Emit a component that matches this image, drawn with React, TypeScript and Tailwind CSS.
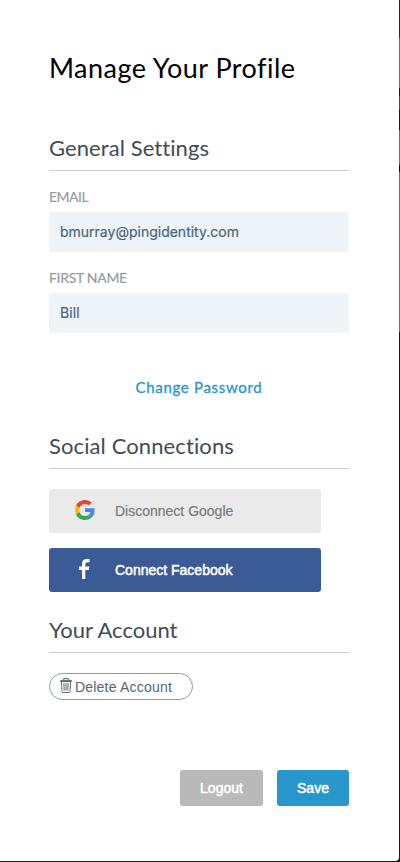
import type { ReactNode } from "react";

function Heading({ children, spacing }: { children: ReactNode; spacing: string }) {
  return (
    <h2 className={`h-[33px] border-b border-[#cccfd1] text-[22px] leading-[20px] whitespace-nowrap text-[#434b54] ${spacing}`}>
      {children}
    </h2>
  );
}

function Field({ label, value, labelClass, valueClass }: { label: string; value: string; labelClass: string; valueClass: string }) {
  return (
    <label className="flex flex-col">
      <span className={`h-[22px] text-[14px] leading-[14px] text-[#959da3] [-webkit-text-stroke:0.2px_#959da3] ${labelClass}`}>{label}</span>
      <span className={`flex h-10 items-center rounded-[3px] bg-[#eef4f7] px-[11px] pb-px font-['Inter',sans-serif] text-[14px] text-[#4b6580] [-webkit-text-stroke:0.2px_#4b6580] ${valueClass}`}>
        {value}
      </span>
    </label>
  );
}

function GoogleLogo() {
  return (
    <svg viewBox="0 0 48 48" className="size-5">
      <path fill="#EA4335" d="M24 9.5c3.54 0 6.71 1.22 9.21 3.6l6.85-6.85C35.9 2.38 30.47 0 24 0 14.62 0 6.51 5.38 2.56 13.22l7.98 6.19C12.43 13.72 17.74 9.5 24 9.5z" />
      <path fill="#4285F4" d="M46.98 24.55c0-1.57-.15-3.09-.38-4.55H24v9.02h12.94c-.58 2.96-2.26 5.48-4.78 7.18l7.73 6c4.51-4.18 7.09-10.36 7.09-17.65z" />
      <path fill="#FBBC05" d="M10.53 28.59c-.48-1.45-.76-2.99-.76-4.59s.27-3.14.76-4.59l-7.98-6.19C.92 16.46 0 20.12 0 24c0 3.88.92 7.54 2.56 10.78l7.97-6.19z" />
      <path fill="#34A853" d="M24 48c6.48 0 11.93-2.13 15.89-5.81l-7.73-6c-2.15 1.45-4.92 2.3-8.16 2.3-6.26 0-11.57-4.22-13.47-9.91l-7.98 6.19C6.51 42.62 14.62 48 24 48z" />
    </svg>
  );
}

function FacebookLogo() {
  return (
    <svg viewBox="0 0 11 20" className="h-5 w-[11px]" fill="white">
      <path d="M3 20V11H0V7.5h3V4.9C3 1.8 4.8 0 7.8 0H10.5v3.2H8.8C7.2 3.2 6.3 4 6.3 5.3v2.2h4L9.8 11H6.3v9H3z" />
    </svg>
  );
}

function TrashIcon() {
  return (
    <svg viewBox="0 0 12 15" className="h-[15px] w-3 shrink-0" fill="none" stroke="#596875" strokeWidth="1">
      <path d="M0.5 3.5V2.4h11v1.1zM3.7 2.3V.6h4.6v1.7M1.4 3.6l.6 10c0 .6.4.9.9.9h6.2c.5 0 .9-.3.9-.9l.6-10M3.9 5l.3 7.6M6 5v7.6M8.1 5l-.3 7.6" />
    </svg>
  );
}

export default function App() {
  return (
    <div className="flex h-[862px] w-[400px] bg-[#171a16] font-['Lato',sans-serif] [font-variant-ligatures:none]">
      <main className="flex h-[861px] w-[399px] flex-col rounded-br-[4px] bg-white pr-[50px] pl-[49px]">
        <h1 className="mt-[54px] h-[84px] text-[27px] leading-[28px] tracking-[0.46px] whitespace-nowrap text-black">Manage Your Profile</h1>
        <Heading spacing="tracking-[0.08px]">General Settings</Heading>
        <div className="mt-[19px] flex flex-col gap-[19px]">
          <Field label="EMAIL" value="bmurray@pingidentity.com" labelClass="tracking-[-0.5px]" valueClass="tracking-[0px]" />
          <Field label="FIRST NAME" value="Bill" labelClass="tracking-[-0.3px]" valueClass="tracking-[0.1px]" />
        </div>
        <a className="mt-[45px] h-[58px] text-center text-[15px] leading-[18px] font-normal tracking-[0.68px] text-[#2996cc] [-webkit-text-stroke:0.3px_#2996cc]">Change Password</a>
        <Heading spacing="tracking-[0.11px]">Social Connections</Heading>
        <div className="mt-5 flex w-[272px] flex-col gap-[15px] font-['Liberation_Sans',sans-serif] text-[14px]">
          <button className="flex h-11 items-center rounded-[3px] bg-[#eaeaea] text-[#7b7b7b]">
            <span className="ml-[26px] flex w-10 shrink-0 pb-[2px]"><GoogleLogo /></span>
            <span className="whitespace-nowrap [-webkit-text-stroke:0.2px_#7b7b7b]">Disconnect Google</span>
          </button>
          <button className="flex h-11 items-center rounded-[3px] bg-[#3b5b96] text-white">
            <span className="ml-[30px] flex w-9 shrink-0 pb-[2px]"><FacebookLogo /></span>
            <span className="whitespace-nowrap [-webkit-text-stroke:0.5px_white]">Connect Facebook</span>
          </button>
        </div>
        <div className="mt-[28px]">
          <Heading spacing="tracking-[0px]">Your Account</Heading>
        </div>
        <button className="mt-5 flex h-[27px] w-36 items-center gap-[3px] rounded-full border border-[#919a9e] pl-[10px] font-['Liberation_Sans',sans-serif] text-[14px] text-[#566473]">
          <span className="flex pb-[3px]"><TrashIcon /></span>
          <span className="pt-[2px] tracking-[0.2px] whitespace-nowrap">Delete Account</span>
        </button>
        <div className="mt-[70px] flex h-9 justify-end gap-[14px] font-['Liberation_Sans',sans-serif] text-[14px] text-white [-webkit-text-stroke:0.5px_white]">
          <button className="w-[83px] rounded-[3px] bg-[#b9b9b9]">Logout</button>
          <button className="w-[72px] rounded-[3px] bg-[#2996cc]">Save</button>
        </div>
      </main>
      <div className="flex w-px flex-col">
        <span className="h-[38px] bg-[#172f2c]" />
        <span className="h-[50px] bg-[#5b7770]" />
        <span className="h-[8px] bg-[#0d1917]" />
        <span className="h-[14px] bg-[#3b504a]" />
        <span className="h-[20px] bg-[#0d1917]" />
        <span className="h-[35px] bg-[#5b7770]" />
        <span className="h-[7px] bg-[#0d1917]" />
        <span className="h-[160px] bg-[#5b7770]" />
        <span className="grow bg-[#171a16]" />
      </div>
    </div>
  );
}
